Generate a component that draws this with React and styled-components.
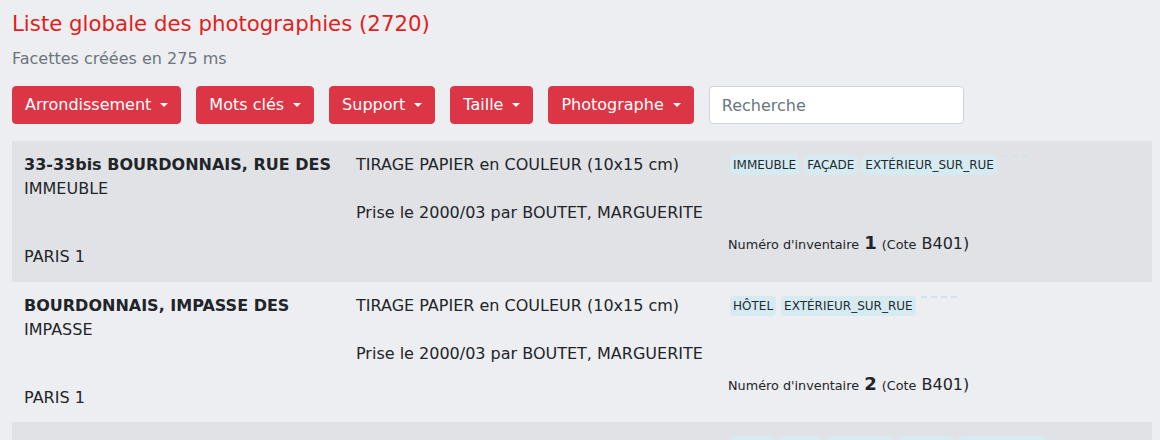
import React from "react";
import styled, { createGlobalStyle } from "styled-components";

const Global = createGlobalStyle`
  html, body { margin: 0; padding: 0; overflow: hidden; }
  body {
    background: #edeef2;
    font-family: "DejaVu Sans", sans-serif;
    font-size: 16px;
    line-height: 1.5;
    color: #212529;
  }
`;

const Page = styled.div`
  padding: 11px 8px 0 12px;
`;

const Title = styled.h1`
  margin: 0;
  font-size: 21.3px;
  font-weight: 400;
  line-height: 26px;
  color: #e11f1c;
`;

const Subtitle = styled.p`
  margin: 10px 0 0;
  color: #6c757d;
  font-size: 16px;
  line-height: 24px;
`;

const Toolbar = styled.div`
  display: flex;
  align-items: center;
  gap: 15px;
  margin-top: 15px;
`;

const DropButton = styled.button`
  display: inline-flex;
  align-items: center;
  height: 38px;
  padding: 0 12px;
  border: 1px solid #dc3545;
  border-radius: 4px;
  background: #dc3545;
  color: #fff;
  font-family: "DejaVu Sans", sans-serif;
  font-size: 16px;
  line-height: 24px;
  cursor: pointer;
  &::after {
    content: "";
    display: inline-block;
    margin-left: 9px;
    border-top: 4.8px solid #fff;
    border-left: 4.8px solid transparent;
    border-right: 4.8px solid transparent;
  }
`;

const Search = styled.input`
  box-sizing: border-box;
  width: 255px;
  height: 38px;
  padding: 6px 12px;
  border: 1px solid #ced4da;
  border-radius: 4px;
  background: #fff;
  font-family: "DejaVu Sans", sans-serif;
  font-size: 16px;
  color: #495057;
  &::placeholder { color: #6c757d; }
`;

const Table = styled.div`
  margin-top: 17px;
  width: 1140px;
`;

const Row = styled.div`
  display: grid;
  grid-template-columns: 332px 372px 436px;
  height: ${(p) => p.$h}px;
  box-sizing: border-box;
  background: ${(p) => (p.$striped ? "#e1e2e6" : "transparent")};
`;

const Cell = styled.div`
  padding: 12px;
  display: flex;
  flex-direction: column;
  align-items: flex-start;
`;

const Address = styled.strong`
  font-weight: 700;
`;

const Place = styled.div`
  margin-top: 44px;
`;

const Para = styled.div`
  & + & { margin-top: 24px; }
`;

const Tags = styled.div`
  display: flex;
  align-items: flex-start;
  gap: 5px;
  padding-left: 2px;
  height: 24px;
  padding-top: 2px;
  box-sizing: border-box;
`;

const Tag = styled.span`
  display: inline-flex;
  align-items: center;
  height: 20px;
  padding: 0 3px;
  border-radius: 4px;
  background: #d6eaf1;
  color: #1e2a30;
  font-size: 12px;
  line-height: 20px;
`;

const Dashes = styled.span`
  width: ${(p) => p.$w}px;
  border-top: 2px dashed #cfe4ed;
`;

const Inventory = styled.div`
  margin-top: 54px;
  line-height: 24px;
`;

const Small = styled.small`
  font-size: 12.8px;
`;

const Num = styled.b`
  font-size: 18px;
  font-weight: 700;
`;

const rows = [
  {
    address: "33-33bis BOURDONNAIS, RUE DES",
    kind: "IMMEUBLE",
    place: "PARIS 1",
    support: "TIRAGE PAPIER en COULEUR (10x15 cm)",
    taken: "Prise le 2000/03 par BOUTET, MARGUERITE",
    tags: ["IMMEUBLE", "FAÇADE", "EXTÉRIEUR_SUR_RUE"],
    dash: 26,
    num: 1,
    cote: "B401",
    h: 141,
  },
  {
    address: "BOURDONNAIS, IMPASSE DES",
    kind: "IMPASSE",
    place: "PARIS 1",
    support: "TIRAGE PAPIER en COULEUR (10x15 cm)",
    taken: "Prise le 2000/03 par BOUTET, MARGUERITE",
    tags: ["HÔTEL", "EXTÉRIEUR_SUR_RUE"],
    dash: 36,
    num: 2,
    cote: "B401",
    h: 140,
  },
  {
    tags: ["PORTE", "COUR", "ENSEIGNE", "BALCON", "DEVANTURES"],
    dash: 4,
    h: 140,
  },
];

export default function App() {
  return (
    <>
      <Global />
      <Page>
        <Title>Liste globale des photographies (2720)</Title>
        <Subtitle>Facettes créées en 275 ms</Subtitle>
        <Toolbar>
          <DropButton>Arrondissement</DropButton>
          <DropButton>Mots clés</DropButton>
          <DropButton>Support</DropButton>
          <DropButton>Taille</DropButton>
          <DropButton>Photographe</DropButton>
          <Search placeholder="Recherche" />
        </Toolbar>
        <Table>
          {rows.map((r, i) => (
            <Row key={i} $striped={i % 2 === 0} $h={r.h}>
              <Cell>
                {r.address && <Address>{r.address}</Address>}
                {r.kind && <span>{r.kind}</span>}
                {r.place && <Place>{r.place}</Place>}
              </Cell>
              <Cell>
                {r.support && <Para>{r.support}</Para>}
                {r.taken && <Para>{r.taken}</Para>}
              </Cell>
              <Cell>
                <Tags>
                  {r.tags.map((t) => (
                    <Tag key={t}>{t}</Tag>
                  ))}
                  <Dashes $w={r.dash} />
                </Tags>
                {r.num && (
                  <Inventory>
                    <Small>Numéro d'inventaire</Small> <Num>{r.num}</Num>{" "}
                    <Small>(Cote</Small> {r.cote})
                  </Inventory>
                )}
              </Cell>
            </Row>
          ))}
        </Table>
      </Page>
    </>
  );
}
